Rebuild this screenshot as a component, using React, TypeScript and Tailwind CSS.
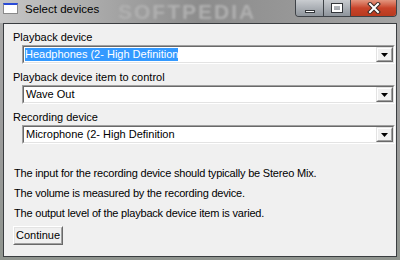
const font = { fontFamily: '"Liberation Sans", Arial, sans-serif' };

function DropArrow() {
    return (
        <div className="w-[17px] h-full border border-t-[#e3e3e3] border-l-[#e3e3e3] border-b-[#696969] border-r-[#696969] bg-[#f0f0f0]">
            <div className="w-full h-full border border-t-white border-l-white border-b-[#a0a0a0] border-r-[#a0a0a0] flex items-center justify-center">
                <svg width="7" height="4" viewBox="0 0 7 4">
                    <path d="M0 0h7L3.5 4z" fill="#000" />
                </svg>
            </div>
        </div>
    );
}

function Combo({ value, selected }: { value: string; selected?: boolean }) {
    return (
        <div className="ml-[18px] mr-[1px] h-[19px] border border-t-[#a0a0a0] border-l-[#a0a0a0] border-b-white border-r-white">
            <div className="h-full flex bg-white border border-t-[#696969] border-l-[#696969] border-b-[#e3e3e3] border-r-[#e3e3e3]">
                <div className="flex-1 flex items-center pl-[1px]">
                    {selected ? (
                        <span className="h-[13px] leading-[13px] bg-[#3399ff] text-white">{value}</span>
                    ) : (
                        <span className="leading-[15px] pl-[1px] text-black">{value}</span>
                    )}
                </div>
                <DropArrow />
            </div>
        </div>
    );
}

function Label({ children, top }: { children: string; top: string }) {
    return <div className={`pl-[9px] leading-[15px] text-black ${top}`}>{children}</div>;
}

export default function App() {
    return (
        <div
            className="relative w-[400px] h-[260px] flex flex-col overflow-hidden bg-gradient-to-b from-[#a9a9a9] via-[#9c9c9c] to-[#8f948e] text-[11px]"
            style={font}
        >
            {/* glass title bar */}
            <div className="relative h-[23px] flex items-start bg-gradient-to-r from-[#c6c6c6] via-[#8c8c8c] to-[#a4a4a4]">
                {/* watermark */}
                <div className="absolute left-[118px] top-0 text-[21px] leading-[23px] font-bold tracking-[2px] text-[#b0b0b0] blur-[1px] select-none">
                    SOFTPEDIA
                </div>
                <div className="relative mt-[3px] ml-[3px] w-[15px] h-[11px] border border-[#8a8a8a] border-t-2 border-t-[#2a4bd8] bg-white" />
                <div className="relative ml-[7px] mt-[2px] text-[11.5px] leading-[15px] text-black">Select devices</div>

                {/* caption buttons */}
                <div className="relative ml-auto mr-[3px] flex h-[17px] border border-t-0 border-[#3e4247] rounded-b-[4px] overflow-hidden">
                    <div className="w-[28px] border-r border-[#3e4247] bg-gradient-to-b from-[#c9ccd0] to-[#8e949b] flex items-end justify-center pb-[3px]">
                        <div className="w-[10px] h-[3px] bg-white border border-[#33363a]" />
                    </div>
                    <div className="w-[27px] border-r border-[#3e4247] bg-gradient-to-b from-[#c9ccd0] to-[#8e949b] flex items-center justify-center">
                        <div className="w-[10px] h-[8px] border-2 border-white outline outline-1 outline-[#33363a]" />
                    </div>
                    <div className="w-[45px] bg-gradient-to-b from-[#e2957f] via-[#c8432a] to-[#b83a1e] flex items-center justify-center">
                        <svg width="14" height="12" viewBox="0 0 14 12">
                            <path d="M3 2l8 8M11 2l-8 8" stroke="#3b2a26" strokeWidth="4" strokeLinecap="square" />
                            <path d="M3 2l8 8M11 2l-8 8" stroke="#fff" strokeWidth="2" strokeLinecap="square" />
                        </svg>
                    </div>
                </div>
            </div>

            {/* client area */}
            <div className="flex-1 mx-[3px] mb-[3px] border border-[#3a3d40] bg-[#f0f0f0] flex flex-col">
                <Label top="mt-[6px]">Playback device</Label>
                <Combo value="Headphones (2- High Definition" selected />
                <Label top="mt-[6px]">Playback device item to control</Label>
                <Combo value="Wave Out" />
                <Label top="mt-[6px]">Recording device</Label>
                <Combo value="Microphone (2- High Definition" />

                <p className="pl-[10px] mt-[22px] leading-[15px] tracking-[-0.2px] text-black">
                    The input for the recording device should typically be Stereo Mix.
                </p>
                <p className="pl-[10px] mt-[5px] leading-[15px] tracking-[-0.2px] text-black">
                    The volume is measured by the recording device.
                </p>
                <p className="pl-[10px] mt-[5px] leading-[15px] tracking-[-0.2px] text-black">
                    The output level of the playback device item is varied.
                </p>

                <div className="ml-[9px] mt-[5px] w-[50px] h-[19px] border border-t-white border-l-white border-b-[#696969] border-r-[#696969]">
                    <div className="w-full h-full border border-t-[#e3e3e3] border-l-[#e3e3e3] border-b-[#a0a0a0] border-r-[#a0a0a0] bg-[#f0f0f0] flex items-center justify-center leading-[15px] text-black">
                        Continue
                    </div>
                </div>
            </div>
        </div>
    );
}
